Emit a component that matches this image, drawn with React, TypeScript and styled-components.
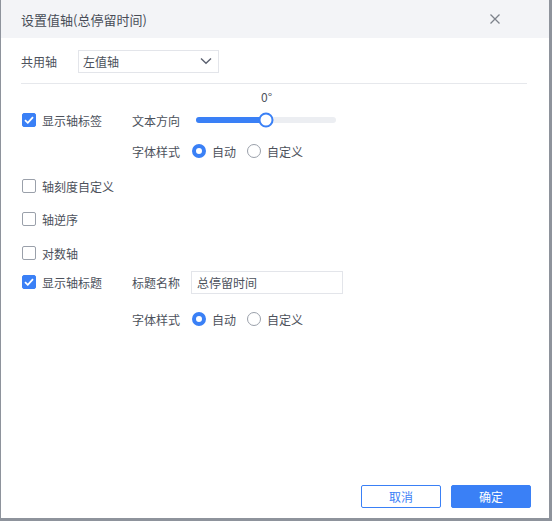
import React, { useState } from 'react';
import styled, { createGlobalStyle } from 'styled-components';

const GlobalStyle = createGlobalStyle`
  html, body {
    margin: 0;
    padding: 0;
    background: #8e939c;
  }
  body {
    font-family: "Noto Sans CJK SC", "Noto Sans", sans-serif;
    color: #4c515b;
  }
`;

const BLUE = '#3a80f6';

const Page = styled.div`
  width: 552px;
  height: 521px;
  padding: 0 3px 3px 1px;
  box-sizing: border-box;
`;

const Dialog = styled.div`
  height: 100%;
  background: #fff;
  display: flex;
  flex-direction: column;
`;

const Header = styled.div`
  height: 38px;
  background: #f3f4f7;
  display: flex;
  align-items: center;
  justify-content: space-between;
  padding: 0 49px 0 20px;
`;

const Title = styled.div`
  font-size: 13px;
  color: #484d57;
`;

const CloseIcon = styled.svg`
  width: 10px;
  height: 10px;
  stroke: #7d828b;
  stroke-width: 1.3;
`;

const Body = styled.div`
  flex: 1;
  padding: 11px 20px 0 20px;
  display: flex;
  flex-direction: column;
`;

const Row = styled.div<{ top?: number }>`
  height: 24px;
  display: flex;
  align-items: center;
  margin-top: ${(p) => p.top ?? 0}px;
  font-size: 12px;
`;

const LabelCol = styled.div`
  width: 57px;
  flex-shrink: 0;
  color: #4c515b;
`;

const Select = styled.div`
  width: 141px;
  height: 23px;
  box-sizing: border-box;
  border: 1px solid #e3e5ea;
  display: flex;
  align-items: center;
  justify-content: space-between;
  padding: 0 6px 0 4px;
  color: #4c515b;
`;

const Chevron = styled.svg`
  width: 12px;
  height: 8px;
  stroke: #5b6170;
  stroke-width: 1.4;
  fill: none;
`;

const Divider = styled.div`
  height: 1px;
  background: #e6e8ec;
  margin-top: 10px;
  margin-right: 2px;
`;

const DegreeRow = styled.div`
  height: 24px;
  padding-left: 240px;
  display: flex;
  align-items: center;
  font-size: 12px;
`;

const CheckCol = styled.label`
  width: 110px;
  flex-shrink: 0;
  display: flex;
  align-items: center;
  gap: 6px;
  padding-left: 1px;
  box-sizing: border-box;
`;

const Box = styled.span<{ checked: boolean }>`
  width: 14px;
  height: 14px;
  box-sizing: border-box;
  border-radius: 2px;
  border: 1px solid ${(p) => (p.checked ? BLUE : '#9aa0aa')};
  background: ${(p) => (p.checked ? BLUE : '#fff')};
  display: flex;
  align-items: center;
  justify-content: center;
`;

const FieldLabel = styled.div<{ w: number }>`
  width: ${(p) => p.w}px;
  flex-shrink: 0;
  padding-left: 1px;
  box-sizing: border-box;
`;

const Track = styled.div`
  position: relative;
  width: 140px;
  height: 6px;
  border-radius: 3px;
  background: #eceef2;
`;

const Fill = styled.div`
  height: 100%;
  border-radius: 3px;
  background: ${BLUE};
`;

const Thumb = styled.div`
  position: absolute;
  top: 50%;
  width: 15px;
  height: 15px;
  box-sizing: border-box;
  border: 2px solid ${BLUE};
  border-radius: 50%;
  background: #fff;
  transform: translate(-50%, -50%);
`;

const RadioGroup = styled.div`
  display: flex;
  align-items: center;
`;

const RadioItem = styled.label`
  display: flex;
  align-items: center;
  gap: 6px;
  margin-right: 11px;
`;

const RadioDot = styled.span<{ on: boolean }>`
  width: 14px;
  height: 14px;
  box-sizing: border-box;
  border-radius: 50%;
  border: ${(p) => (p.on ? `4px solid ${BLUE}` : '1px solid #9aa0aa')};
  background: #fff;
`;

const TextInput = styled.div`
  width: 152px;
  height: 23px;
  box-sizing: border-box;
  border: 1px solid #e3e5ea;
  display: flex;
  align-items: center;
  padding-left: 5px;
`;

const Footer = styled.div`
  display: flex;
  justify-content: flex-end;
  gap: 10px;
  padding: 0 18px 10px 0;
`;

const Button = styled.button<{ primary?: boolean }>`
  width: 80px;
  height: 23px;
  box-sizing: border-box;
  border: 1px solid ${BLUE};
  border-radius: 2px;
  background: ${(p) => (p.primary ? BLUE : '#fff')};
  color: ${(p) => (p.primary ? '#fff' : BLUE)};
  font-family: inherit;
  font-size: 12px;
  padding: 0;
`;

const Tick = () => (
  <svg width="10" height="8" viewBox="0 0 10 8" fill="none" stroke="#fff" strokeWidth="1.8">
    <path d="M1 4.2 L3.8 6.8 L9 1.2" />
  </svg>
);

const Check: React.FC<{ checked: boolean; label: string }> = ({ checked, label }) => (
  <CheckCol>
    <Box checked={checked}>{checked && <Tick />}</Box>
    {label}
  </CheckCol>
);

const FontStyle: React.FC<{ top: number }> = ({ top }) => (
  <Row top={top}>
    <CheckCol />
    <FieldLabel w={61}>字体样式</FieldLabel>
    <RadioGroup>
      <RadioItem>
        <RadioDot on />
        自动
      </RadioItem>
      <RadioItem>
        <RadioDot on={false} />
        自定义
      </RadioItem>
    </RadioGroup>
  </Row>
);

export default function App() {
  const [angle] = useState(0);
  const pct = ((angle + 90) / 180) * 100;

  return (
    <Page>
      <GlobalStyle />
      <Dialog>
        <Header>
          <Title>设置值轴(总停留时间)</Title>
          <CloseIcon viewBox="0 0 10 10">
            <path d="M0.5 0.5 L9.5 9.5 M9.5 0.5 L0.5 9.5" />
          </CloseIcon>
        </Header>
        <Body>
          <Row>
            <LabelCol>共用轴</LabelCol>
            <Select>
              左值轴
              <Chevron viewBox="0 0 12 8">
                <path d="M1 1.5 L6 6.2 L11 1.5" />
              </Chevron>
            </Select>
          </Row>
          <Divider />
          <DegreeRow>{angle}°</DegreeRow>
          <Row>
            <Check checked label="显示轴标签" />
            <FieldLabel w={65}>文本方向</FieldLabel>
            <Track>
              <Fill style={{ width: `${pct}%` }} />
              <Thumb style={{ left: `${pct}%` }} />
            </Track>
          </Row>
          <FontStyle top={7} />
          <Row top={11}>
            <Check checked={false} label="轴刻度自定义" />
          </Row>
          <Row top={9}>
            <Check checked={false} label="轴逆序" />
          </Row>
          <Row top={10}>
            <Check checked={false} label="对数轴" />
          </Row>
          <Row top={5}>
            <Check checked label="显示轴标题" />
            <FieldLabel w={60}>标题名称</FieldLabel>
            <TextInput>总停留时间</TextInput>
          </Row>
          <FontStyle top={13} />
        </Body>
        <Footer>
          <Button>取消</Button>
          <Button primary>确定</Button>
        </Footer>
      </Dialog>
    </Page>
  );
}
